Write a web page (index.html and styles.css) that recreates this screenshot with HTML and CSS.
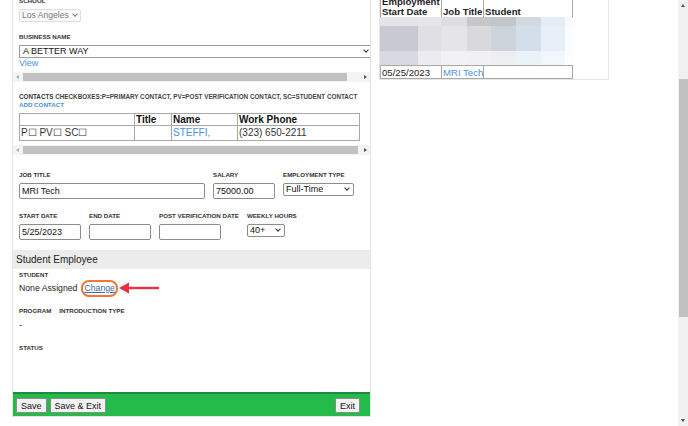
FILE: index.html
```html
<!DOCTYPE html>
<html lang="en">
<head>
  <meta charset="UTF-8" />
  <meta name="viewport" content="width=device-width, initial-scale=1.0" />
  <title>Employment Placement</title>
  <link rel="stylesheet" href="styles.css">
</head>
<body>
  <div class="page">
    <div class="content">

      <form class="edit-panel">
        <div class="pad">
          <label class="lbl">SCHOOL</label>
          <span class="select-wrap school-sel">
            <select class="sel" disabled><option>Los Angeles</option></select>
          </span>
        </div>

        <div class="scroller">
          <div class="scroll-inner">
            <label class="lbl mt11">BUSINESS NAME</label>
            <span class="select-wrap business-sel">
              <select class="sel"><option>A BETTER WAY</option></select>
            </span>
            <a class="link view-link" href="#">View</a>
          </div>
          <div class="hscroll">
            <span class="arr arr-left"></span>
            <div class="track"><div class="thumb thumb-a"></div></div>
            <span class="arr arr-right"></span>
          </div>
        </div>

        <div class="scroller">
          <div class="scroll-inner">
            <div class="lbl mt11 contacts-lbl">CONTACTS <span class="lbl-note">CHECKBOXES:P=PRIMARY CONTACT, PV=POST VERIFICATION CONTACT, SC=STUDENT CONTACT</span></div>
            <a class="lbl link" href="#">ADD CONTACT</a>
            <table class="contacts">
              <tr>
                <th class="c-check"></th>
                <th class="c-title">Title</th>
                <th class="c-name">Name</th>
                <th class="c-phone">Work Phone</th>
              </tr>
              <tr>
                <td>P☐ PV☐ SC☐</td>
                <td></td>
                <td><a class="link" href="#">STEFFI,</a></td>
                <td>(323) 650-2211</td>
              </tr>
            </table>
          </div>
          <div class="hscroll mt5">
            <span class="arr arr-left"></span>
            <div class="track"><div class="thumb thumb-b"></div></div>
            <span class="arr arr-right"></span>
          </div>
        </div>

        <div class="row job-row">
          <div class="field">
            <label class="lbl">JOB TITLE</label>
            <input class="inp w-job" type="text" value="MRI Tech" />
          </div>
          <div class="field">
            <label class="lbl">SALARY</label>
            <input class="inp w-date" type="text" value="75000.00" />
          </div>
          <div class="field">
            <label class="lbl">EMPLOYMENT TYPE</label>
            <span class="select-wrap type-sel">
              <select class="sel"><option>Full-Time</option></select>
            </span>
          </div>
        </div>

        <div class="row date-row">
          <div class="field">
            <label class="lbl">START DATE</label>
            <input class="inp w-date" type="text" value="5/25/2023" />
          </div>
          <div class="field">
            <label class="lbl">END DATE</label>
            <input class="inp w-date" type="text" value="" />
          </div>
          <div class="field">
            <label class="lbl">POST VERIFICATION DATE</label>
            <input class="inp w-date" type="text" value="" />
          </div>
          <div class="field">
            <label class="lbl">WEEKLY HOURS</label>
            <span class="select-wrap hours-sel">
              <select class="sel"><option>40+</option></select>
            </span>
          </div>
        </div>

        <div class="section-head">Student Employee</div>

        <div class="pad">
          <label class="lbl student-lbl">STUDENT</label>
          <div class="student-line">
            <span>None Assigned</span>
            <span class="highlight"><a class="change-link" href="#">Change</a></span>
            <svg class="pointer" width="40" height="12" viewBox="0 0 40 12">
              <line x1="8" y1="6" x2="40" y2="6" stroke="#e8313f" stroke-width="2.4" />
              <polygon points="0,6 10,0.5 10,11.5" fill="#e8313f" />
            </svg>
          </div>
          <div class="pair">
            <label class="lbl">PROGRAM</label>
            <label class="lbl">INTRODUCTION TYPE</label>
          </div>
          <div class="dash">-</div>
          <label class="lbl status-lbl">STATUS</label>
        </div>

        <div class="action-bar">
          <button type="button" class="btn">Save</button>
          <button type="button" class="btn">Save &amp; Exit</button>
          <button type="button" class="btn btn-exit">Exit</button>
        </div>
      </form>

      <div class="side-panel">
        <table class="history">
          <tr>
            <th class="h-date">Employment<br>Start Date</th>
            <th class="h-title">Job Title</th>
            <th class="h-student">Student</th>
          </tr>
        </table>
        <div class="blurred">
          <span style="background:#e3e3e8"></span><span style="background:#e6e6ea"></span><span style="background:#dedee0"></span><span style="background:#c7c7c9"></span><span style="background:#c2c6cb"></span><span style="background:#d1d9e1"></span><span style="background:#e5eef8"></span><span style="background:#f8fafd"></span>
          <span style="background:#c9c9d3"></span><span style="background:#dfdfe4"></span><span style="background:#e5e5e8"></span><span style="background:#d9d9dc"></span><span style="background:#cdd3da"></span><span style="background:#d2dfea"></span><span style="background:#e7f0f9"></span><span style="background:#fafcfe"></span>
          <span style="background:#d9d9e1"></span><span style="background:#ececf0"></span><span style="background:#f2f2f4"></span><span style="background:#f1f1f3"></span><span style="background:#edeff3"></span><span style="background:#ebf2f8"></span><span style="background:#f2f7fc"></span><span style="background:#fcfdfe"></span>
        </div>
        <table class="history">
          <tr>
            <td class="h-date">05/25/2023</td>
            <td class="h-title"><a class="link" href="#">MRI Tech</a></td>
            <td class="h-student"></td>
          </tr>
        </table>
      </div>

    </div>

    <div class="vscroll">
      <span class="v-arr v-up"></span>
      <div class="v-thumb"></div>
      <span class="v-arr v-down"></span>
    </div>
  </div>
</body>
</html>
```

FILE: styles.css
```css
* {
  margin: 0;
  padding: 0;
  box-sizing: border-box;
}

body {
  font-family: 'Liberation Sans', Arial, sans-serif;
  font-size: 9px;
  color: #222;
  background: #fff;
}

.page {
  display: flex;
  width: 688px;
  height: 426px;
  overflow: hidden;
}

.content {
  flex: 1;
  display: flex;
  align-items: flex-start;
  padding-left: 12px;
}

/* ---------- left edit form ---------- */

.edit-panel {
  width: 359px;
  margin-top: -3px;
  border: 1px solid #e4e4e4;
  border-top: none;
}

.pad {
  padding: 0 6px;
}

.lbl {
  display: block;
  font-size: 6.2px;
  line-height: 8px;
  font-weight: bold;
  color: #333;
  white-space: nowrap;
}

.contacts-lbl {
  font-size: 6.3px;
}

.lbl-note {
  font-weight: bold;
  color: #444;
}

.mt11 { margin-top: 11px; }
.mt5 { margin-top: 5px; }

.link {
  color: #4b92d8;
  text-decoration: none;
}

.select-wrap {
  position: relative;
  display: block;
  height: 13px;
  margin-top: 4px;
}

.select-wrap::after {
  content: '';
  position: absolute;
  right: 5px;
  top: 3px;
  width: 3px;
  height: 3px;
  border-right: 1.2px solid #333;
  border-bottom: 1.2px solid #333;
  transform: rotate(45deg);
  pointer-events: none;
}

.sel {
  appearance: none;
  -webkit-appearance: none;
  width: 100%;
  height: 13px;
  padding: 0 12px 0 2px;
  font-family: 'Liberation Sans', Arial, sans-serif;
  font-size: 9px;
  line-height: 11px;
  color: #111;
  background: #fff;
  border: 1px solid #8d8d8d;
  border-radius: 2px;
}

.school-sel { width: 62px; }
.school-sel .sel {
  padding: 0 8px 0 2px;
  font-size: 8.6px;
  color: #7a7a7a;
  background: #fafafa;
  border-color: #dedede;
  opacity: 1;
}
.school-sel::after { right: 4px; border-color: #777; }

.business-sel { width: 354px; }
.business-sel .sel {
  border-radius: 0;
  border-color: #9a9a9a;
  padding-left: 3px;
}

.type-sel { width: 71px; }
.hours-sel { width: 38px; }

.view-link {
  display: block;
  line-height: 10px;
  font-size: 9px;
}

.scroller {
  width: 100%;
}

.scroll-inner {
  padding: 0 6px;
  overflow: hidden;
}

.hscroll {
  display: flex;
  align-items: center;
  height: 10px;
  margin-top: 4px;
  background: #f4f4f4;
}

.track {
  flex: 1;
  height: 8px;
}

.thumb {
  height: 8px;
  background: #c1c1c1;
}

.thumb-a { width: 324px; }
.thumb-b { width: 335px; }

.arr {
  flex: none;
  width: 10px;
  height: 10px;
  position: relative;
}

.arr::before {
  content: '';
  position: absolute;
  top: 3px;
  width: 0;
  height: 0;
  border-top: 2px solid transparent;
  border-bottom: 2px solid transparent;
}

.arr-left::before {
  left: 3px;
  border-right: 3px solid #b0b0b0;
}

.arr-right::before {
  left: 4px;
  border-left: 3px solid #505050;
}

.contacts {
  width: 341px;
  margin-top: 4px;
  border-collapse: collapse;
  font-size: 10px;
}

.contacts th,
.contacts td {
  border: 1px solid #a8a8a8;
  padding: 0 1px;
  text-align: left;
  white-space: nowrap;
}

.contacts th {
  height: 11px;
  line-height: 11px;
  font-weight: bold;
  color: #111;
}

.contacts td {
  height: 14px;
  line-height: 14px;
  color: #333;
}

.c-check { width: 115px; }
.c-title { width: 37px; }
.c-name { width: 66px; }

.row {
  display: flex;
  gap: 8px;
  padding: 0 6px;
}

.job-row { margin-top: 16px; }
.date-row { margin-top: 13px; }

.inp {
  display: block;
  height: 16px;
  margin-top: 4px;
  padding: 0 2px;
  font-family: 'Liberation Sans', Arial, sans-serif;
  font-size: 9px;
  color: #111;
  border: 1px solid #8d8d8d;
  border-radius: 2px;
}

.w-job { width: 186px; }
.w-date { width: 62px; }

.section-head {
  margin-top: 10px;
  height: 19px;
  line-height: 19px;
  padding-left: 3px;
  font-size: 10px;
  color: #222;
  background: #ececec;
}

.student-lbl { margin-top: 2px; }

.student-line {
  display: flex;
  align-items: center;
  height: 16px;
  margin-top: 1px;
  font-size: 8.7px;
  color: #222;
}

.highlight {
  margin-left: 4px;
  padding: 0 1px;
  line-height: 13px;
  border: 2px solid #f2763a;
  border-radius: 8px;
}

.change-link {
  color: #3d6ea6;
  text-decoration: underline;
}

.pointer {
  margin-left: 1px;
}

.pair {
  display: flex;
  gap: 8px;
  margin-top: 11px;
}

.dash {
  margin-top: 5px;
  line-height: 10px;
  font-size: 9px;
}

.status-lbl { margin-top: 14px; }

.action-bar {
  display: flex;
  gap: 3px;
  margin-top: 40px;
  padding: 4px 10px 3px 3px;
  background: #24bb4b;
  border-top: 2px solid #1e8a3d;
}

.btn {
  height: 15px;
  padding: 0 4px;
  font-family: 'Liberation Sans', Arial, sans-serif;
  font-size: 9px;
  color: #111;
  background: #f3f3f3;
  border: 1px solid #8a8a8a;
  border-radius: 1px;
}

.btn-exit {
  margin-left: auto;
}

/* ---------- right history panel ---------- */

.side-panel {
  width: 230px;
  margin-top: -4px;
  margin-left: 8px;
  border: 1px solid #e6e6e6;
  border-top: none;
}

.history {
  width: 193px;
  border-collapse: collapse;
  font-size: 9.6px;
  table-layout: fixed;
}

.history th,
.history td {
  border: 1px solid #a8a8a8;
  padding: 0 0 0 1px;
  text-align: left;
  color: #222;
  white-space: nowrap;
  overflow: hidden;
}

.history th {
  line-height: 10px;
  font-weight: bold;
  vertical-align: bottom;
  border-bottom: none;
}

.history td {
  height: 13px;
  line-height: 11px;
}

.h-date { width: 61px; }
.h-title { width: 42px; }

.blurred {
  display: grid;
  grid-template-columns: 38px 23px 26px 24px 25px 25px 24px 8px;
  grid-template-rows: 9px 25px 14px;
  width: 193px;
}

/* ---------- window scrollbar ---------- */

.vscroll {
  flex: none;
  width: 10px;
  height: 426px;
  display: flex;
  flex-direction: column;
  align-items: center;
  background: #f1f1f1;
}

.v-arr {
  width: 0;
  height: 0;
  border-left: 2.5px solid transparent;
  border-right: 2.5px solid transparent;
}

.v-up {
  margin-top: 4px;
  border-bottom: 3px solid #505050;
}

.v-thumb {
  width: 9px;
  height: 238px;
  margin-top: 72px;
  background: #c1c1c1;
}

.v-down {
  margin-top: auto;
  margin-bottom: 4px;
  border-top: 3px solid #505050;
}
```
